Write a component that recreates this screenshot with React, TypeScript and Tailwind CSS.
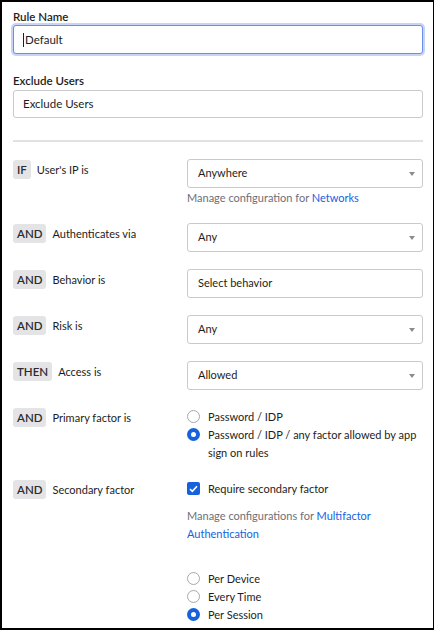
import React from "react";

const Badge = ({ children }: { children: React.ReactNode }) => (
  <span className="inline-flex h-[19px] items-center rounded-[3px] bg-[#e4e4e6] px-[4px] text-[11.5px] font-semibold leading-none text-[#2b2b30]">
    {children}
  </span>
);

const Caret = () => (
  <svg width="6" height="4" viewBox="0 0 6 4" className="absolute right-[7px] top-1/2 -translate-y-1/2">
    <path d="M0 0h6L3 4z" fill="#8a8a90" />
  </svg>
);

const Select = ({ value, caret = true }: { value: string; caret?: boolean }) => (
  <div className="relative flex h-[29px] items-center rounded-[3px] border border-[#c9c9ce] bg-white pl-[10px] text-[11px] text-[#1d1d21]">
    {value}
    {caret && <Caret />}
  </div>
);

const Row = ({
  badge,
  label,
  children,
  className = "",
}: {
  badge: string;
  label: string;
  children: React.ReactNode;
  className?: string;
}) => (
  <div className={"flex " + className}>
    <div className="flex w-[174px] shrink-0 items-start gap-[6px] pt-px">
      <Badge>{badge}</Badge>
      <span className="text-[11px] leading-[19px] text-[#1d1d21]">{label}</span>
    </div>
    <div className="flex-1">{children}</div>
  </div>
);

const Radio = ({ checked }: { checked?: boolean }) =>
  checked ? (
    <span className="mt-[2px] inline-flex h-[13px] w-[13px] shrink-0 items-center justify-center rounded-full bg-[#1662dd]">
      <span className="h-[5px] w-[5px] rounded-full bg-white" />
    </span>
  ) : (
    <span className="mt-[2px] inline-block h-[13px] w-[13px] shrink-0 rounded-full border border-[#a8a8ae] bg-white" />
  );

export default function App() {
  return (
    <div
      className="box-border h-[630px] w-[434px] overflow-hidden border-b-2 border-l-2 border-r border-t-2 border-black bg-white pl-[11px] pr-[10px] text-[#1d1d21]"
      style={{ fontFamily: "Lato, 'Noto Sans', sans-serif" }}
    >
      <div className="pt-[7px] text-[11.5px] font-semibold leading-[16px]">Rule Name</div>
      <div className="flex h-[29px] items-center rounded-[3px] border border-[#6b8ee8] bg-white pl-[9px] text-[11.5px] shadow-[0_0_0_2px_#c6d4f7]">
        <span className="mr-px h-[14px] w-px bg-[#1d1d21]" />
        Default
      </div>
      <div className="mt-[19px] text-[11.5px] font-semibold leading-[16px]">Exclude Users</div>
      <div className="mt-[1px] flex h-[28px] items-center rounded-[3px] border border-[#c9c9ce] bg-white pl-[9px] text-[11.5px]">
        Exclude Users
      </div>
      <div className="mt-[22px] h-[2px] bg-[#e1e1e3]" />

      <Row badge="IF" label="User's IP is" className="mt-[17px]">
        <Select value="Anywhere" />
        <div className="mt-[1px] text-[11px] leading-[18px] text-[#6e6e78]">
          Manage configuration for <span className="text-[#1662dd]">Networks</span>
        </div>
      </Row>

      <Row badge="AND" label="Authenticates via" className="mt-[16px]">
        <Select value="Any" />
      </Row>

      <Row badge="AND" label="Behavior is" className="mt-[17px]">
        <Select value="Select behavior" caret={false} />
      </Row>

      <Row badge="AND" label="Risk is" className="mt-[17px]">
        <Select value="Any" />
      </Row>

      <Row badge="THEN" label="Access is" className="mt-[17px]">
        <Select value="Allowed" />
      </Row>

      <Row badge="AND" label="Primary factor is" className="mt-[17px]">
        <div className="pt-[1px] text-[11px] leading-[18px]">
          <div className="flex gap-[8px]">
            <Radio />
            <span>Password / IDP</span>
          </div>
          <div className="flex gap-[8px]">
            <Radio checked />
            <span className="whitespace-nowrap">
              Password / IDP / any factor allowed by app
              <br />
              sign on rules
            </span>
          </div>
        </div>
      </Row>

      <Row badge="AND" label="Secondary factor" className="mt-[17px]">
        <div className="pt-[1px] text-[11px] leading-[18px]">
          <div className="flex gap-[8px]">
            <span className="mt-[2px] inline-flex h-[13px] w-[13px] shrink-0 items-center justify-center rounded-[2px] bg-[#1662dd]">
              <svg width="9" height="8" viewBox="0 0 9 8">
                <path d="M1 4l2.3 2.3L8 1.3" stroke="white" strokeWidth="1.6" fill="none" />
              </svg>
            </span>
            <span>Require secondary factor</span>
          </div>
          <div className="mt-[9px] text-[#6e6e78]">
            Manage configurations for <span className="text-[#1662dd]">Multifactor</span>
            <br />
            <span className="text-[#1662dd]">Authentication</span>
          </div>
          <div className="mt-[27px]">
            <div className="flex gap-[8px]">
              <Radio />
              <span>Per Device</span>
            </div>
            <div className="flex gap-[8px]">
              <Radio />
              <span>Every Time</span>
            </div>
            <div className="flex gap-[8px]">
              <Radio checked />
              <span>Per Session</span>
            </div>
          </div>
        </div>
      </Row>
    </div>
  );
}
